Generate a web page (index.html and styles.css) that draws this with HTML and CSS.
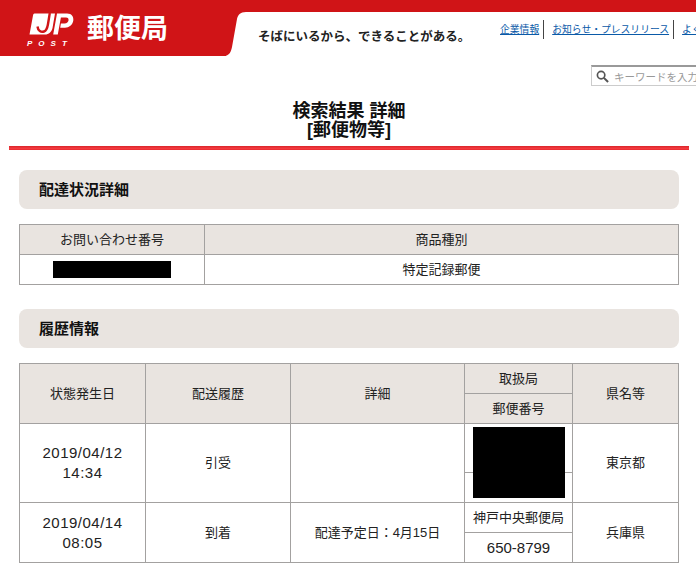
FILE: index.html
```html
<!DOCTYPE html>
<html lang="ja">
<head>
<meta charset="utf-8">
<title>検索結果 詳細</title>
<link rel="stylesheet" href="styles.css">
</head>
<body>
<div class="page">
  <header class="site-header">
    <div class="top-strip"></div>
    <div class="brand">
      <svg class="brand-shape" viewBox="0 0 20 44" width="20" height="44" aria-hidden="true">
        <path d="M0 0H20C14 0 12 3 11 7L6 35C5 40 3 44 -2 44H0Z" fill="#d01417"/>
      </svg>
      <div class="logo">
        <svg class="logo-mark" viewBox="27 13 48 22" width="48" height="22" aria-hidden="true">
          <path d="M34.500 13.500H55L52.500 28C51.500 32 49 34.500 45 34.500H29.500L33 15.500C33.200 14.300 33.700 13.500 34.500 13.500Z" fill="#fff"/>
          <path d="M37.500 26.500C38 31 41 32.500 44 31.500C47 30.500 47.500 27 48 24L49.800 13" fill="none" stroke="#d01417" stroke-width="2.400"/>
          <path d="M57 13.500H67C72 13.500 73.800 17 73.300 20.500C72.700 25 69 27.700 65 27.700H60.200L60.900 23.500H64.500C67 23.500 68.200 22 68.500 20.500C68.800 18.500 68 17.500 66 17.500H60.900L57.800 34.500H53.200Z" fill="#fff"/>
        </svg>
        <span class="logo-post">POST</span>
      </div>
      <span class="brand-name">郵便局</span>
    </div>
    <div class="header-main">
      <p class="tagline">そばにいるから、できることがある。</p>
      <div class="header-tools">
        <nav class="top-nav">
          <a href="#">企業情報</a>
          <a href="#">お知らせ・プレスリリース</a>
          <a href="#">よくあるご質問</a>
        </nav>
        <div class="search">
          <svg class="search-icon" viewBox="0 0 14 14" width="13" height="13" aria-hidden="true">
            <circle cx="5.500" cy="5.500" r="4" fill="none" stroke="#555" stroke-width="1.800"/>
            <path d="M8.500 8.500L13 13" stroke="#555" stroke-width="2.200"/>
          </svg>
          <span class="search-text">キーワードを入力</span>
        </div>
      </div>
    </div>
  </header>

  <h1 class="title">検索結果 詳細<br>[郵便物等]</h1>
  <div class="title-rule"></div>

  <main class="content">
    <h2 class="section-head">配達状況詳細</h2>
    <table class="data summary">
      <colgroup><col class="c-number"><col></colgroup>
      <tr><th>お問い合わせ番号</th><th>商品種別</th></tr>
      <tr>
        <td><span class="redact-inline"></span></td>
        <td>特定記録郵便</td>
      </tr>
    </table>

    <h2 class="section-head history-head">履歴情報</h2>
    <div class="history-wrap">
      <table class="data history">
        <colgroup>
          <col class="c-date"><col class="c-track"><col class="c-detail"><col class="c-office"><col>
        </colgroup>
        <tr><th rowspan="2">状態発生日</th><th rowspan="2">配送履歴</th><th rowspan="2">詳細</th><th>取扱局</th><th rowspan="2">県名等</th></tr>
        <tr><th>郵便番号</th></tr>
        <tr class="tall"><td rowspan="2" class="num">2019/04/12<br>14:34</td><td rowspan="2">引受</td><td rowspan="2"></td><td></td><td rowspan="2">東京都</td></tr>
        <tr><td></td></tr>
        <tr><td rowspan="2" class="num">2019/04/14<br>08:05</td><td rowspan="2">到着</td><td rowspan="2">配達予定日：4月15日</td><td>神戸中央郵便局</td><td rowspan="2">兵庫県</td></tr>
        <tr><td class="postal">650-8799</td></tr>
      </table>
      <div class="redact-block"></div>
    </div>
  </main>
</div>
</body>
</html>
```

FILE: styles.css
```css
* {
  box-sizing: border-box;
}

html,
body {
  margin: 0;
  padding: 0;
  background: #fff;
}

body {
  color: #222;
  font-family: "Liberation Sans", "Noto Sans CJK JP", sans-serif;
}

.page {
  width: 696px;
  height: 572px;
  overflow: hidden;
}

/* Header */
.site-header {
  display: flex;
  position: relative;
  height: 86px;
}

.top-strip {
  position: absolute;
  top: 0;
  left: 0;
  right: 0;
  height: 12px;
  background: #d01417;
}

.brand {
  position: relative;
  display: flex;
  flex: none;
  width: 226px;
  height: 56px;
  padding: 13px 0 0 27px;
  gap: 12px;
  background: #d01417;
}

.brand-shape {
  position: absolute;
  left: 226px;
  top: 12px;
}

.logo {
  display: flex;
  flex-direction: column;
  width: 48px;
}

.logo-mark {
  display: block;
}

.logo-post {
  margin-top: 4px;
  color: #fff;
  font-size: 8px;
  font-weight: 700;
  font-style: italic;
  line-height: 9px;
  letter-spacing: 6px;
  white-space: nowrap;
}

.brand-name {
  color: #fff;
  font-size: 27px;
  font-weight: 700;
  line-height: 32px;
  white-space: nowrap;
}

.header-main {
  display: flex;
  flex: 1;
  position: relative;
  min-width: 0;
}

.tagline {
  margin: 28px 0 0 32px;
  flex: none;
  width: 242px;
  color: #222;
  font-size: 12.500px;
  font-weight: 700;
  line-height: 18px;
  white-space: nowrap;
}

.header-tools {
  flex: none;
  width: 300px;
  padding-top: 20px;
}

.top-nav {
  display: flex;
  height: 19px;
}

.top-nav a {
  padding: 0 4px 0 8px;
  border-right: 1px solid #444;
  color: #0a5aa8;
  font-size: 9.800px;
  line-height: 19px;
  white-space: nowrap;
}

.top-nav a:first-child {
  padding-left: 0;
}

.search {
  display: flex;
  align-items: center;
  gap: 5px;
  width: 200px;
  height: 21px;
  margin: 26px 0 0 91px;
  padding-left: 4px;
  border: 1px solid #ccc;
  border-top: 2px solid #999;
}

.search-icon {
  flex: none;
}

.search-text {
  color: #999;
  font-size: 10.500px;
  white-space: nowrap;
}

/* Title */
.title {
  width: 680px;
  height: 45px;
  margin: 15px 0 0 9px;
  padding: 1px 0 0;
  color: #111;
  font-size: 18px;
  font-weight: 700;
  line-height: 19px;
  text-align: center;
}

.title-rule {
  width: 680px;
  height: 4px;
  margin-left: 9px;
  background: linear-gradient(#d9252a, #f43c40 60%, #e8282d);
}

/* Sections */
.content {
  padding: 20px 17px 0 19px;
}

.section-head {
  height: 39px;
  margin: 0;
  padding-left: 20px;
  border-radius: 8px;
  background: #e9e4e0;
  color: #111;
  font-size: 15px;
  font-weight: 700;
  line-height: 39px;
}

.history-head {
  margin-top: 24px;
}

.data {
  width: 660px;
  table-layout: fixed;
  border-collapse: collapse;
  color: #222;
  font-size: 13px;
}

.data th,
.data td {
  height: 30px;
  padding: 0;
  border: 1px solid #a3a1a0;
  font-weight: 400;
  line-height: 20px;
  text-align: center;
  vertical-align: middle;
}

.data th {
  background: #e9e4e0;
}

.summary {
  margin-top: 15px;
}

.c-number {
  width: 185px;
}

.redact-inline {
  display: block;
  width: 118px;
  height: 17px;
  margin: 0 auto;
  background: #000;
}

.history-wrap {
  position: relative;
  margin-top: 15px;
}

.c-date {
  width: 126px;
}

.c-track {
  width: 145px;
}

.c-detail {
  width: 174px;
}

.c-office {
  width: 108px;
}

.data .tall td {
  height: 49px;
}

.data .num {
  font-size: 15px;
  letter-spacing: 0.500px;
}

.data .postal {
  font-size: 15px;
}

.redact-block {
  position: absolute;
  top: 64px;
  left: 454px;
  width: 92px;
  height: 71px;
  background: #000;
}
```
